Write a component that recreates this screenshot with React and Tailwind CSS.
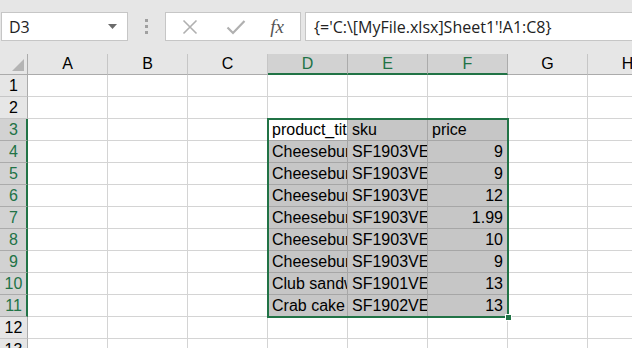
import React from "react";

const cols = ["A", "B", "C", "D", "E", "F", "G", "H"];

const data = {
  3: ["product_title", "sku", "price"],
  4: ["Cheeseburger", "SF1903VEG", "9"],
  5: ["Cheeseburger", "SF1903VEG", "9"],
  6: ["Cheeseburger", "SF1903VEG", "12"],
  7: ["Cheeseburger", "SF1903VEG", "1.99"],
  8: ["Cheeseburger", "SF1903VEG", "10"],
  9: ["Cheeseburger", "SF1903VEG", "9"],
  10: ["Club sandwich", "SF1901VEG", "13"],
  11: ["Crab cake", "SF1902VEG", "13"],
};

const rows = [1, 2, 3, 4, 5, 6, 7, 8, 9, 10, 11, 12, 13];

// columns are 1-indexed: D=4, E=5, F=6
const isSelRow = (r) => r >= 3 && r <= 11;
const isSelCol = (c) => c >= 4 && c <= 6;

const Cell = ({ r, c }) => {
  const sel = isSelRow(r) && isSelCol(c);
  const active = r === 3 && c === 4;
  const rowData = data[r];
  const text = rowData && isSelCol(c) ? rowData[c - 4] : "";
  const right = c === 6 && r > 3;
  return (
    <div
      className={`h-[22px] border-r border-b overflow-hidden whitespace-nowrap flex items-end px-[4px] text-[16px] leading-[20px] text-black ${
        active
          ? "bg-white border-[#a6a6a6]"
          : sel
          ? "bg-[#c6c6c6] border-[#a6a6a6]"
          : "bg-white border-[#d4d4d4]"
      } ${right ? "justify-end" : "justify-start"}`}
    >
      {text}
    </div>
  );
};

export default function App() {
  return (
    <div
      className="w-[632px] h-[348px] overflow-hidden bg-white"
      style={{ fontFamily: "'Liberation Sans', Arial, sans-serif" }}
    >
      {/* Toolbar */}
      <div className="h-[54px] bg-[#e6e6e6] flex items-start pt-[12px]">
        <div
          className="ml-[1px] w-[127px] h-[29px] bg-white border border-[#c6c6c6] flex items-center justify-between pl-[7px] pr-[10px] text-[16px] text-[#222]"
          style={{ fontFamily: "'Open Sans', 'Noto Sans', sans-serif" }}
        >
          <span>D3</span>
          <svg width="9" height="5" viewBox="0 0 9 5">
            <path d="M0 0 L9 0 L4.5 5 Z" fill="#6b6b6b" />
          </svg>
        </div>
        <div className="w-[37px] h-[29px] flex flex-col items-center justify-center gap-[3px]">
          <div className="w-[3px] h-[3px] bg-[#a0a0a0]" />
          <div className="w-[3px] h-[3px] bg-[#a0a0a0]" />
          <div className="w-[3px] h-[3px] bg-[#a0a0a0]" />
        </div>
        <div className="w-[136px] h-[29px] bg-white border border-[#c6c6c6] flex items-center">
          <div className="w-[44px] flex justify-center ml-[2px]">
            <svg width="16" height="16" viewBox="0 0 16 16">
              <path d="M1.5 1.5 L14.5 14.5 M14.5 1.5 L1.5 14.5" stroke="#b0b0b0" strokeWidth="1.6" />
            </svg>
          </div>
          <div className="w-[48px] flex justify-center">
            <svg width="20" height="16" viewBox="0 0 20 16">
              <path d="M1.5 8.5 L7 14 L18.5 2" stroke="#b0b0b0" strokeWidth="2.2" fill="none" />
            </svg>
          </div>
          <div
            className="flex-1 flex justify-center italic text-[19px] leading-[20px] text-[#555] pr-[6px]"
            style={{ fontFamily: "'Liberation Serif', 'Times New Roman', serif" }}
          >
            fx
          </div>
        </div>
        <div
          className="ml-[4px] flex-1 -mr-[4px] h-[29px] bg-white border border-[#c6c6c6] flex items-center pl-[8px] text-[16px] text-[#222]"
          style={{ fontFamily: "'Open Sans', 'Noto Sans', sans-serif" }}
        >
          {"{='C:\\[MyFile.xlsx]Sheet1'!A1:C8}"}
        </div>
      </div>

      {/* Sheet */}
      <div className="relative">
        <div className="grid grid-cols-[28px_repeat(8,80px)]">
          {/* corner */}
          <div className="h-[21px] bg-[#e6e6e6] border-r border-b border-[#ababab] relative">
            <svg width="12" height="12" viewBox="0 0 12 12" className="absolute right-[3px] bottom-[3px]">
              <path d="M12 0 L12 12 L0 12 Z" fill="#b4b4b4" />
            </svg>
          </div>
          {cols.map((c, i) =>
            isSelCol(i + 1) ? (
              <div
                key={c}
                className="h-[21px] bg-[#d2d2d2] border-r border-[#ababab] border-b-2 border-b-[#217346] flex items-center justify-center text-[16px] text-[#217346]"
              >
                {c}
              </div>
            ) : (
              <div
                key={c}
                className="h-[21px] bg-[#e6e6e6] border-r border-[#c6c6c6] border-b border-b-[#ababab] flex items-center justify-center text-[16px] text-black"
              >
                {c}
              </div>
            )
          )}

          {rows.map((r) => (
            <React.Fragment key={r}>
              {isSelRow(r) ? (
                <div className="h-[22px] bg-[#d2d2d2] border-b border-[#ababab] border-r-2 border-r-[#217346] flex items-center justify-center text-[16px] text-[#217346] pl-[1px]">
                  {r}
                </div>
              ) : (
                <div className="h-[22px] bg-[#e6e6e6] border-b border-[#c6c6c6] border-r border-r-[#ababab] flex items-center justify-center text-[16px] text-black">
                  {r}
                </div>
              )}
              {cols.map((c, i) => (
                <Cell key={c} r={r} c={i + 1} />
              ))}
            </React.Fragment>
          ))}
        </div>

        {/* selection border */}
        <div className="absolute left-[267px] top-[64px] w-[242px] h-[200px] border-2 border-[#217346] pointer-events-none" />
        <div className="absolute left-[505px] top-[260px] w-[7px] h-[7px] bg-[#217346] border border-white" />
      </div>
    </div>
  );
}
